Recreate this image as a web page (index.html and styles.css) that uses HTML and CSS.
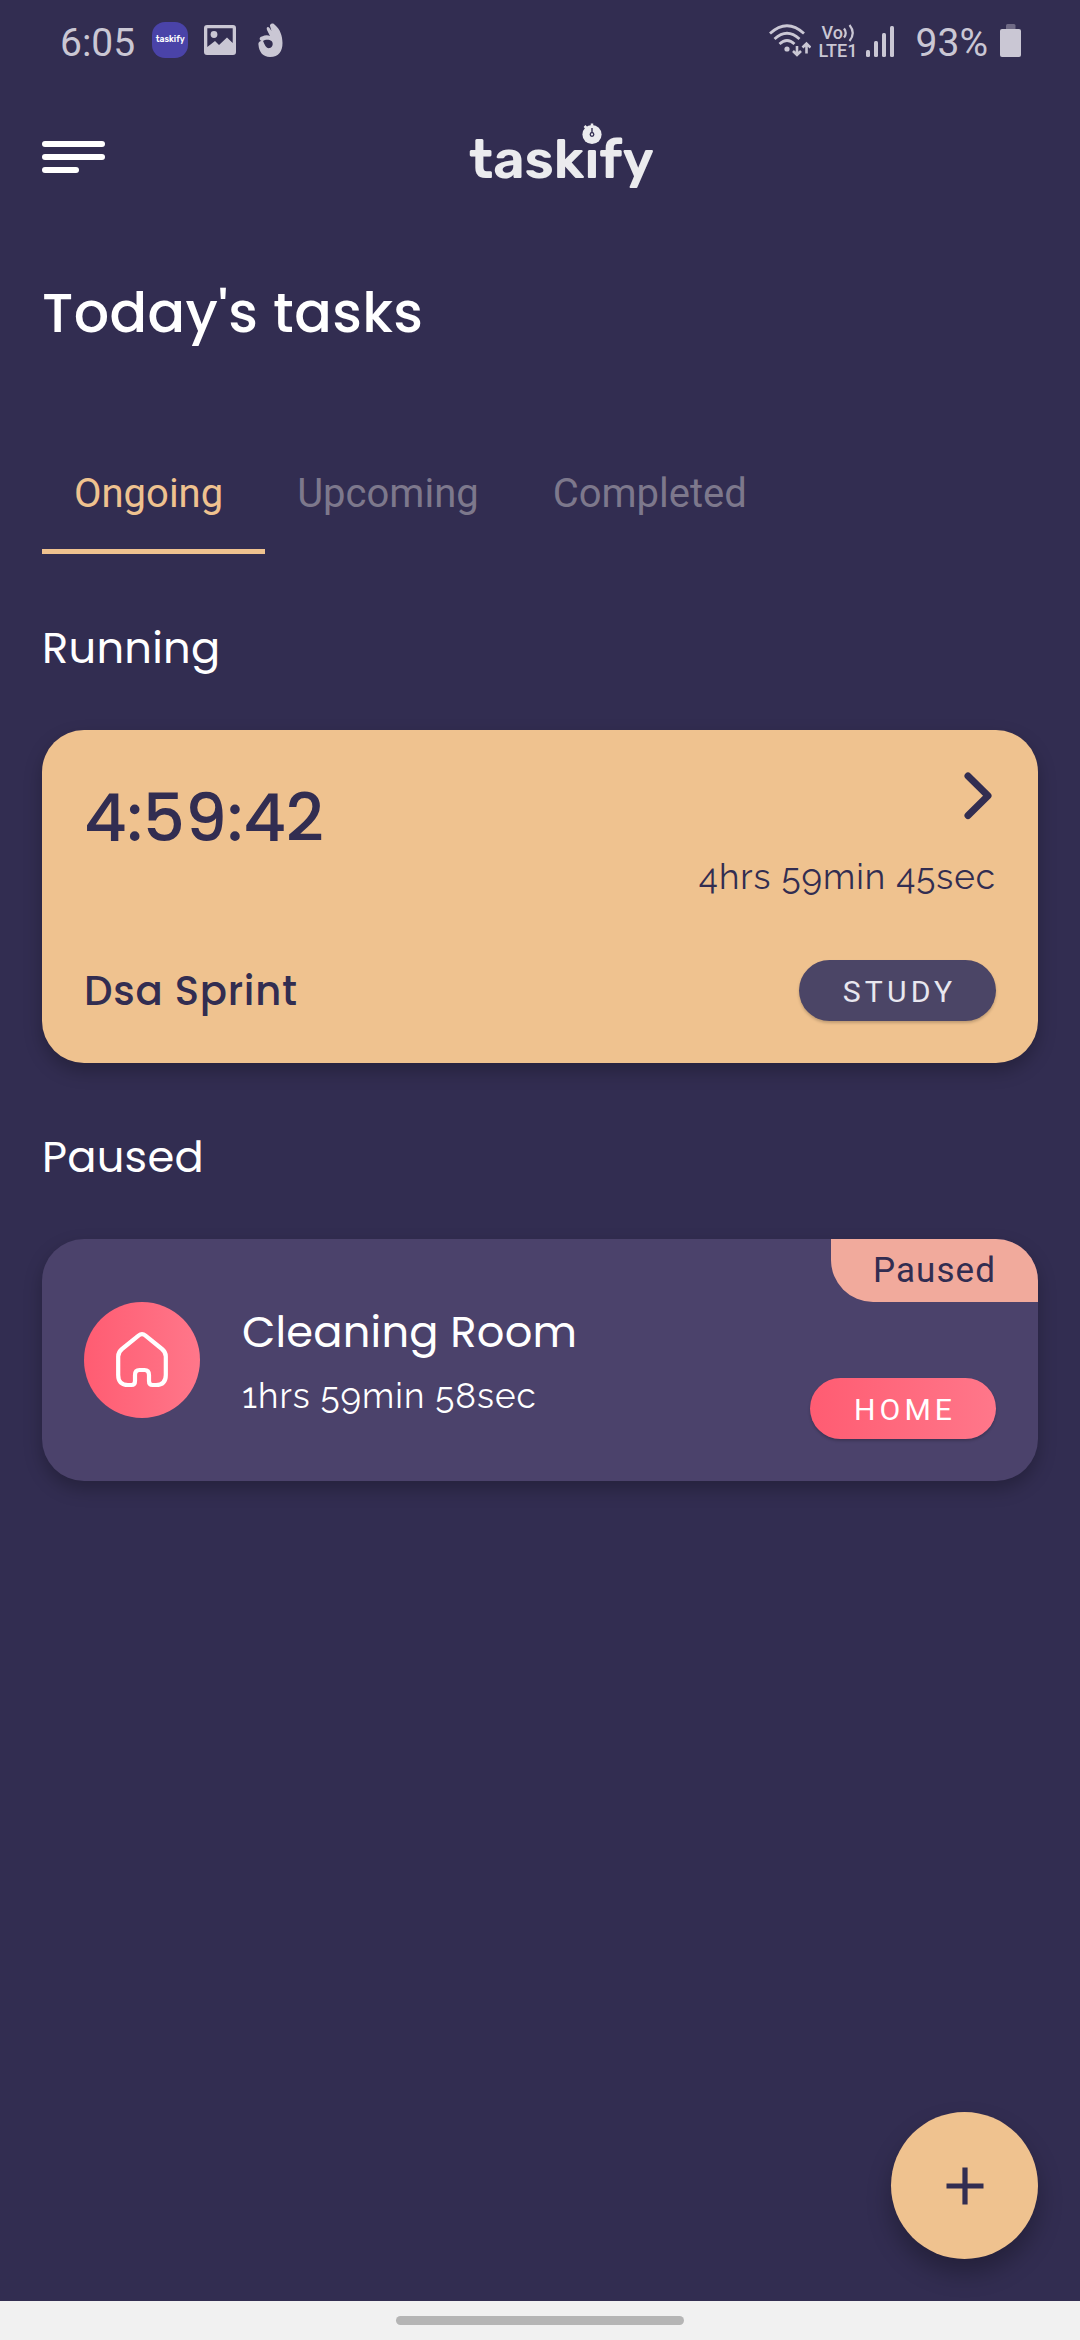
FILE: index.html
```html
<!DOCTYPE html>
<html lang="en">
<head>
<meta charset="utf-8">
<title>Taskify</title>
<link rel="stylesheet" href="styles.css">
</head>
<body>
<div class="screen">
  <div class="status">
    <div class="status-left">
      <span class="clock">6:05</span>
      <span class="app-icon"><span class="app-name">taskify</span></span>
      <svg class="ic-image" width="32" height="30" viewBox="0 0 32 30"><path fill="#cac7d4" fill-rule="evenodd" d="M3 0H29A3 3 0 0 1 32 3V27A3 3 0 0 1 29 30H3A3 3 0 0 1 0 27V3A3 3 0 0 1 3 0ZM3.300 3.300V22L11 16L15 20L23 12.500L28.700 18V3.300Z"/><circle cx="10" cy="9.500" r="3.400" fill="#cac7d4"/></svg>
      <svg class="ic-hand" width="25" height="35" viewBox="0 0 25 35"><path fill="#cac7d4" fill-rule="evenodd" d="M13 1C15 0 16 1 17 2C22 6 24.500 13 24.500 20C24.500 28 21 34 12 34C5 34 1 29 .5 22C0 19 2 18 3.500 18C1 17 1 14 4 13.500C7 12 10 12 12 13L9 7C8 4 10 3 11.500 5L13.500 8L12 3C12 2 12 1.500 13 1ZM5 18C7 16.500 11 16 13.500 18C15.500 20 15 24 12 25C8 26 7 22 5 18Z"/></svg>
    </div>
    <div class="status-right">
      <svg class="ic-wifi" width="42" height="34" viewBox="0 0 42 34" fill="none" stroke="#cac7d4" stroke-width="2.800"><path d="M1 9.500Q18 -6 35 9.500M5.500 15Q18 3.500 30.500 15M10.500 20Q18 13 25.500 20"/><circle cx="18" cy="25" r="2.600" fill="#cac7d4" stroke="none"/><path stroke-width="2.600" d="M28 22V30.500M24 27L28 31L32 27M37.500 29.500V20M33.500 23.500L37.500 19.500L41.500 23.500"/></svg>
      <div class="volte"><span class="vo">Vo<svg width="12" height="18" viewBox="0 0 12 18" fill="none" stroke="#cac7d4" stroke-width="2.200"><path d="M1 4.500Q4.500 9 1 13.500M6.500 1Q13 9 6.500 17"/></svg></span><span>LTE1</span></div>
      <svg class="ic-signal" width="28" height="31" viewBox="0 0 28 31" fill="#cac7d4"><rect x="0" y="24" width="4" height="7" rx="1.500"/><rect x="8" y="15" width="4" height="16" rx="1.500"/><rect x="16" y="7" width="4" height="24" rx="1.500"/><rect x="24" y="0" width="4" height="31" rx="1.500"/></svg>
      <span class="percent">93%</span>
      <svg class="ic-battery" width="21" height="33" viewBox="0 0 21 33"><rect x="6" y="0" width="9.500" height="6" rx="1.500" fill="#6f6a85"/><rect x="0" y="5" width="21" height="28" rx="2" fill="#cac7d4"/></svg>
    </div>
  </div>

  <header class="topbar">
    <div class="menu"><i></i><i></i><i class="short"></i></div>
    <div class="logo">task<span class="logo-i">i<svg width="24" height="28" viewBox="0 0 24 28"><rect x="4" y="12" width="16" height="12.500" fill="#322d51"/><circle cx="12" cy="11.500" r="9.600" fill="#ebebee"/><path d="M12 .5V3M4.500 3L6.500 5" stroke="#ebebee" stroke-width="2.500"/><circle cx="12" cy="11.500" r="1.800" fill="none" stroke="#322d51" stroke-width="1.300"/><path d="M12 5V10" stroke="#322d51" stroke-width="1.400"/></svg></span>fy</div>
  </header>

  <h1 class="title">Today's tasks</h1>

  <nav class="tabs">
    <div class="tab active">Ongoing</div>
    <div class="tab">Upcoming</div>
    <div class="tab">Completed</div>
  </nav>

  <h2 class="section">Running</h2>
  <section class="card run-card">
    <div class="row">
      <div class="timer">4:59:42</div>
      <div class="run-side">
        <svg width="32" height="50" viewBox="0 0 32 50" fill="none" stroke="#322d51" stroke-width="7" stroke-linecap="round" stroke-linejoin="round"><path d="M4 4L24 23.700L4 43.500"/></svg>
        <div class="duration">4hrs 59min 45sec</div>
      </div>
    </div>
    <div class="row bottom">
      <div class="task-name">Dsa Sprint</div>
      <div class="pill study">STUDY</div>
    </div>
  </section>

  <h2 class="section">Paused</h2>
  <section class="card pause-card">
    <div class="avatar"><svg width="56" height="58" viewBox="0 0 56 58" fill="none" stroke="#fff" stroke-width="4.200" stroke-linejoin="round"><path d="M24.500 4.600Q28 1.800 31.500 4.600L48 18Q51.800 21 51.800 25.500V44Q51.800 54 42 54H38.500Q35 54 35 50V44Q35 39 30.500 39H25.500Q21 39 21 44V50Q21 54 17.500 54H14Q4.200 54 4.200 44V25.500Q4.200 21 8 18Z"/></svg></div>
    <div class="info">
      <div class="name">Cleaning Room</div>
      <div class="duration">1hrs 59min 58sec</div>
    </div>
    <div class="side">
      <div class="flag">Paused</div>
      <div class="pill home">HOME</div>
    </div>
  </section>

  <div class="spacer"></div>
  <button class="fab" aria-label="Add task"><svg width="38" height="38" viewBox="0 0 38 38" stroke="#322d51" stroke-width="5.200"><path d="M19 .5V37.500M.5 19H37.500"/></svg></button>
  <footer class="navbar"><div class="handle"></div></footer>
</div>
</body>
</html>
```
FILE: styles.css
```css
* { box-sizing: border-box; margin: 0; padding: 0; }
body { background: #322d51; color: #fff; font-family: Roboto, sans-serif; }
.screen { width: 1080px; height: 2340px; display: flex; flex-direction: column; overflow: hidden; }

/* status bar */
.status { height: 82px; display: flex; justify-content: space-between; padding: 0 59px 0 60px; color: #cac7d4; }
.status-left, .status-right { display: flex; align-items: flex-start; }
.status svg { flex: none; }
.clock, .percent { font-size: 39px; line-height: 46px; margin-top: 20px; }
.app-icon { width: 36px; height: 36px; margin: 22px 0 0 17px; border-radius: 13px; background: #4a43a8; display: flex; justify-content: center; }
.app-name { font: 600 8.5px/35px Rubik, Inter, sans-serif; color: #fff; }
.ic-image { margin: 25px 0 0 16px; }
.ic-hand { margin: 23px 0 0 22px; }
.ic-wifi { margin-top: 24px; }
.volte { display: flex; flex-direction: column; margin: 24px 0 0 8px; font-weight: 500; font-size: 18px; line-height: 17px; width: 40px; }
.vo { display: flex; padding-left: 3px; }
.ic-signal { margin: 26px 0 0 7px; }
.percent { margin-left: 22px; }
.ic-battery { margin: 24px 0 0 12px; }

/* header */
.topbar { height: 148px; display: flex; padding: 59px 42px 0; }
.menu { width: 63px; display: flex; flex-direction: column; gap: 7px; }
.menu i { height: 6px; border-radius: 3px; background: #fff; }
.menu .short { width: 37px; }
.logo { margin-left: 364px; margin-top: -19px; font: 600 54px/77px Rubik, Inter, sans-serif; color: #ebebee; }
.logo-i { position: relative; }
.logo-i svg { position: absolute; left: 50%; top: -5px; transform: translateX(-50%); }

.title, .section, .timer, .task-name, .name { font-family: Poppins, Inter, sans-serif; white-space: nowrap; }
.title { margin: 50px 0 0 42px; font-size: 55.5px; line-height: 66px; font-weight: 500; letter-spacing: .4px; }
.tabs { display: flex; margin: 94px 0 0 42px; height: 114px; }
.tab { padding: 31px 42px 0 32px; font-size: 40px; line-height: 46px; color: #7d788c; }
.tab.active { color: #efc28f; border-bottom: 5px solid #efc28f; }
.section { margin: 69px 0 0 42px; font-size: 43.2px; line-height: 50px; font-weight: 400; letter-spacing: .25px; }

/* cards */
.card { margin: 57px 42px 0; border-radius: 42px; flex: none; box-shadow: 0 8px 18px rgba(0, 0, 0, .25); }
.run-card { height: 333px; background: #efc28f; color: #322d51; padding: 42px; display: flex; flex-direction: column; justify-content: space-between; }
.row { display: flex; justify-content: space-between; }
.timer { font-size: 66px; line-height: 80px; font-weight: 500; margin-top: 6px; }
.run-side { display: flex; flex-direction: column; align-items: flex-end; }
.duration { font-family: Raleway, Lato, sans-serif; font-size: 35px; line-height: 45px; letter-spacing: 1px; white-space: nowrap; }
.run-side .duration { margin-top: 32px; }
.bottom { align-items: center; }
.task-name { font-size: 40.2px; line-height: 48px; font-weight: 500; letter-spacing: .75px; }
.pill { height: 61px; border-radius: 31px; padding-left: 4px; font-size: 30.2px; line-height: 63px; letter-spacing: 4.1px; text-align: center; box-shadow: 0 2px 3px rgba(0, 0, 0, .2); }
.study { width: 197px; background: #4b4566; color: #e8e7ef; }
.home { width: 186px; background: linear-gradient(90deg, #ff5c72, #ff778a); }

.pause-card { height: 242px; background: #4b426b; display: flex; padding-left: 42px; overflow: hidden; }
.avatar { width: 116px; height: 116px; margin-top: 63px; border-radius: 50%; background: linear-gradient(90deg, #ff5c72, #ff778a); display: flex; align-items: center; justify-content: center; }
.info { margin-left: 42px; padding-top: 68px; }
.name { font-size: 43.2px; line-height: 50px; letter-spacing: .2px; }
.info .duration { margin-top: 16px; }
.side { margin-left: auto; display: flex; flex-direction: column; align-items: flex-end; }
.flag { width: 207px; height: 63px; border-bottom-left-radius: 42px; background: #f1aa9c; color: #322d51; font-size: 35px; line-height: 63px; letter-spacing: 1.1px; text-align: center; }
.side .home { margin: 76px 42px 0 0; }

/* floating button and navigation */
.spacer { flex: 1; }
.fab { width: 147px; height: 147px; margin: 0 42px 42px auto; border: 0; border-radius: 50%; background: #efc28f; display: flex; align-items: center; justify-content: center; box-shadow: 0 14px 24px rgba(0, 0, 0, .28); }
.navbar { height: 39px; background: #f1f1f1; display: flex; justify-content: center; padding-top: 15px; }
.handle { width: 288px; height: 9px; border-radius: 5px; background: #b5b5b5; }
```
